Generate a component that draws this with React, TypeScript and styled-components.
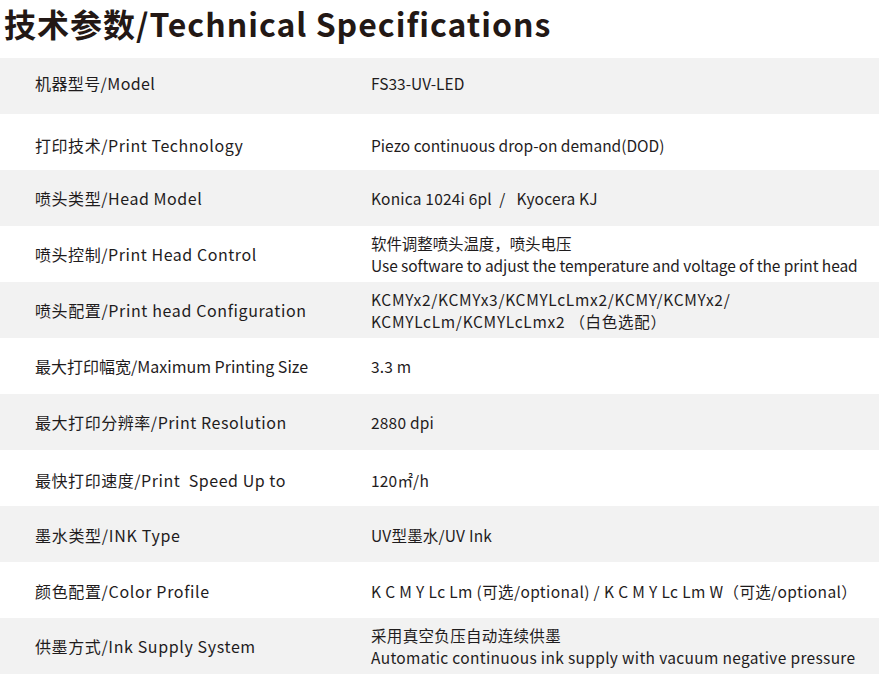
import React from 'react';
import styled, { createGlobalStyle } from 'styled-components';

const GlobalStyle = createGlobalStyle`
  html, body {
    margin: 0;
    padding: 0;
    background: #fff;
  }
  body {
    font-family: "Noto Sans CJK SC", "Noto Sans", sans-serif;
    color: #231f20;
  }
`;

const Page = styled.div`
  width: 879px;
  height: 677px;
  overflow: hidden;
`;

const Header = styled.header`
  height: 58px;
  padding-left: 4px;
`;

const Title = styled.h1`
  margin: 0;
  font-size: 32px;
  font-weight: 700;
  line-height: normal;
  color: #231815;
  letter-spacing: 1px;
`;

const Table = styled.div`
  display: flex;
  flex-direction: column;
`;

const Row = styled.div<{ $shade: boolean; $shift?: number }>`
  display: grid;
  grid-template-columns: 336px 1fr;
  align-items: center;
  height: 56px;
  background: ${(p) => (p.$shade ? '#f2f2f2' : '#fff')};
  padding-top: ${(p) => (p.$shift && p.$shift > 0 ? p.$shift * 2 : 0)}px;
  padding-bottom: ${(p) => (p.$shift && p.$shift < 0 ? -p.$shift * 2 : 0)}px;
  box-sizing: border-box;
`;

const Label = styled.div<{ $track: number }>`
  padding-left: 35px;
  font-size: 16px;
  line-height: 22px;
  color: #1f1c1d;
  white-space: pre;
  letter-spacing: ${(p) => p.$track}px;
`;

const Value = styled.div<{ $track: number }>`
  padding-left: 35px;
  font-size: 15.5px;
  line-height: 22px;
  color: #1f1c1d;
  white-space: pre;
  letter-spacing: ${(p) => p.$track}px;
`;

interface Spec {
  label: string;
  value: string[];
  shift?: number;
  labelTrack?: number;
  valueTrack?: number;
}

const specs: Spec[] = [
  { label: '机器型号/Model', value: ['FS33-UV-LED'], shift: -3, labelTrack: 0.4, valueTrack: 0 },
  { label: '打印技术/Print Technology', value: ['Piezo continuous drop-on demand(DOD)'], shift: 3, valueTrack: 0 },
  { label: '喷头类型/Head Model', value: ['Konica 1024i 6pl  /   Kyocera KJ'] },
  {
    label: '喷头控制/Print Head Control',
    value: ['软件调整喷头温度，喷头电压', 'Use software to adjust the temperature and voltage of the print head'],
    valueTrack: -0.09,
  },
  {
    label: '喷头配置/Print head Configuration',
    value: ['KCMYx2/KCMYx3/KCMYLcLmx2/KCMY/KCMYx2/', 'KCMYLcLm/KCMYLcLmx2 （白色选配）'],
    labelTrack: 0.62,
    valueTrack: 0.7,
  },
  { label: '最大打印幅宽/Maximum Printing Size', value: ['3.3 m'], labelTrack: 0 },
  { label: '最大打印分辨率/Print Resolution', value: ['2880 dpi'] },
  { label: '最快打印速度/Print  Speed Up to', value: ['120㎡/h'], shift: 2 },
  { label: '墨水类型/INK Type', value: ['UV型墨水/UV Ink'], shift: 1, labelTrack: 0.7 },
  {
    label: '颜色配置/Color Profile',
    value: ['K C M Y Lc Lm (可选/optional) / K C M Y Lc Lm W（可选/optional）'],
    shift: 1,
    labelTrack: 0.65,
    valueTrack: 0.37,
  },
  {
    label: '供墨方式/Ink Supply System',
    value: ['采用真空负压自动连续供墨', 'Automatic continuous ink supply with vacuum negative pressure'],
    labelTrack: 0.62,
    valueTrack: 0.33,
  },
];

const App: React.FC = () => (
  <Page>
    <GlobalStyle />
    <Header>
      <Title>技术参数/Technical Specifications</Title>
    </Header>
    <Table>
      {specs.map((s, i) => (
        <Row key={s.label} $shade={i % 2 === 0} $shift={s.shift}>
          <Label $track={s.labelTrack ?? 0.55}>{s.label}</Label>
          <Value $track={s.valueTrack ?? 0.2}>
            {s.value.map((line) => (
              <div key={line}>{line}</div>
            ))}
          </Value>
        </Row>
      ))}
    </Table>
  </Page>
);

export default App;
